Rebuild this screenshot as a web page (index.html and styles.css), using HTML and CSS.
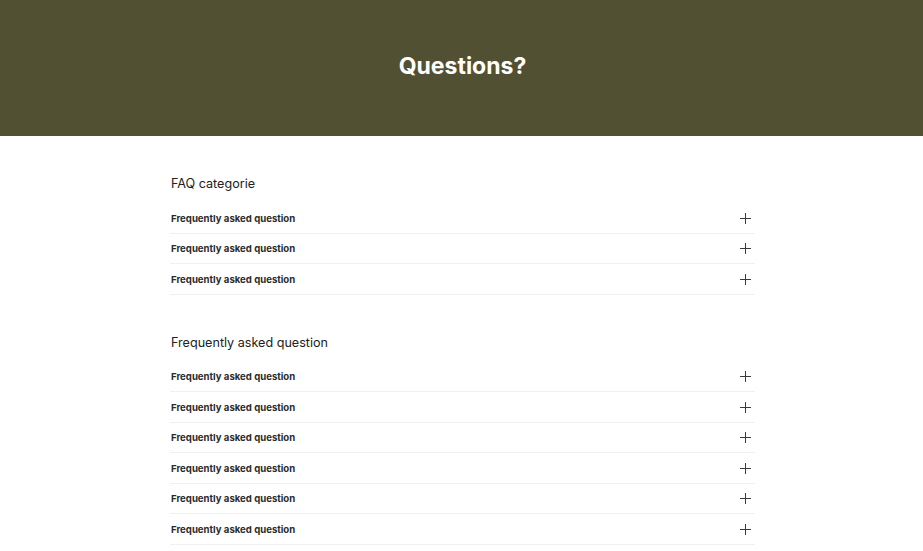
FILE: index.html
```html
<!DOCTYPE html>
<html lang="en">
<head>
<meta charset="utf-8">
<title>Questions?</title>
<link rel="stylesheet" href="styles.css">
</head>
<body>
<header class="hero">
  <h1 class="hero-title">Questions?</h1>
</header>
<main class="faq">
  <section class="faq-group">
    <h2 class="faq-heading">FAQ categorie</h2>
    <ul class="faq-list">
      <li class="faq-item"><span class="faq-q">Frequently asked question</span><span class="faq-plus"></span></li>
      <li class="faq-item"><span class="faq-q">Frequently asked question</span><span class="faq-plus"></span></li>
      <li class="faq-item"><span class="faq-q">Frequently asked question</span><span class="faq-plus"></span></li>
    </ul>
  </section>
  <section class="faq-group">
    <h2 class="faq-heading">Frequently asked question</h2>
    <ul class="faq-list">
      <li class="faq-item"><span class="faq-q">Frequently asked question</span><span class="faq-plus"></span></li>
      <li class="faq-item"><span class="faq-q">Frequently asked question</span><span class="faq-plus"></span></li>
      <li class="faq-item"><span class="faq-q">Frequently asked question</span><span class="faq-plus"></span></li>
      <li class="faq-item"><span class="faq-q">Frequently asked question</span><span class="faq-plus"></span></li>
      <li class="faq-item"><span class="faq-q">Frequently asked question</span><span class="faq-plus"></span></li>
      <li class="faq-item"><span class="faq-q">Frequently asked question</span><span class="faq-plus"></span></li>
    </ul>
  </section>
</main>
</body>
</html>
```
FILE: styles.css
```css
* { box-sizing: border-box; }
html, body { margin: 0; padding: 0; }
body {
  font-family: Inter, "Noto Sans", sans-serif;
  color: #222;
  background: #fff;
}
.hero {
  height: 136px;
  background: #525032;
  display: flex;
  align-items: center;
  justify-content: center;
}
.hero-title {
  margin: 0;
  color: #fff;
  font-size: 23px;
  font-weight: 700;
  line-height: 1;
  padding-bottom: 4px;
  padding-left: 2px;
}
.faq {
  width: 587px;
  margin: 0 auto;
  padding-top: 38px;
  padding-left: 2px;
}
.faq-group { margin-bottom: 38px; }
.faq-heading {
  margin: 0 0 10px 1px;
  padding-top: 1px;
  font-size: 12.6px;
  font-weight: 400;
  color: #222;
  line-height: 18px;
}
.faq-list { list-style: none; margin: 0; padding: 0; }
.faq-item {
  display: flex;
  align-items: center;
  justify-content: space-between;
  height: 30.5px;
  border-bottom: 1px solid #f0f0f0;
  padding-top: 1px;
  padding-left: 1px;
}
.faq-q {
  font-size: 9.6px;
  font-weight: 700;
  color: #2b2b2b;
}
.faq-plus {
  position: relative;
  width: 11px;
  height: 11px;
  margin-right: 4px;
}
.faq-plus::before, .faq-plus::after {
  content: "";
  position: absolute;
  background: #3a3a3a;
}
.faq-plus::before { left: 0; right: 0; top: 5px; height: 1px; }
.faq-plus::after { top: 0; bottom: 0; left: 5px; width: 1px; }
```
